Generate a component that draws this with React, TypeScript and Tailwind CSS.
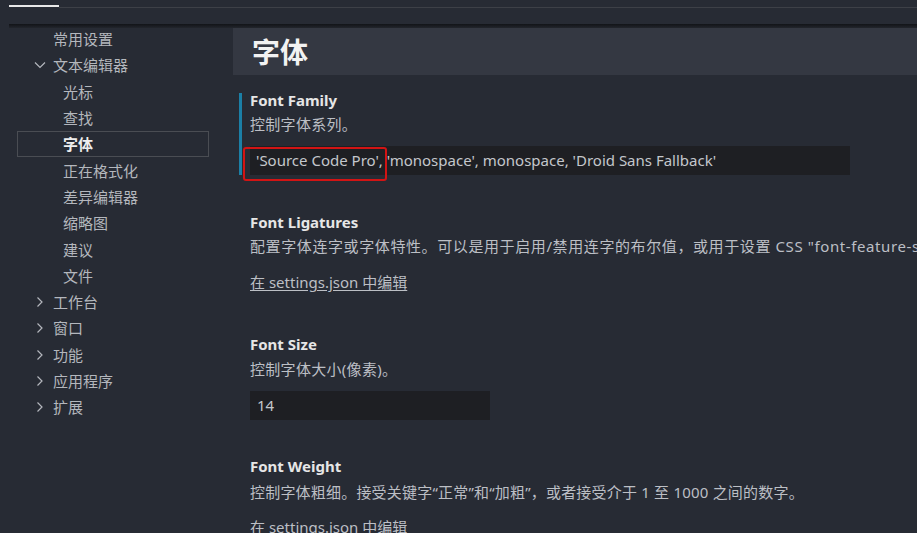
import React from "react";

const font = "font-['Noto_Sans','Noto_Sans_CJK_SC',sans-serif]";

function ChevronRight() {
  return (
    <svg width="8" height="12" viewBox="0 0 8 12" className="shrink-0">
      <path d="M1.5 1.5 L6 6 L1.5 10.5" fill="none" stroke="#b4b7bd" strokeWidth="1.2" />
    </svg>
  );
}
function ChevronDown() {
  return (
    <svg width="12" height="8" viewBox="0 0 12 8" className="shrink-0">
      <path d="M1 1.5 L6 6.5 L11 1.5" fill="none" stroke="#b4b7bd" strokeWidth="1.2" />
    </svg>
  );
}

type Item = { label: string; level: 1 | 2; chevron?: "down" | "right"; selected?: boolean };

const items: Item[] = [
  { label: "常用设置", level: 1 },
  { label: "文本编辑器", level: 1, chevron: "down" },
  { label: "光标", level: 2 },
  { label: "查找", level: 2 },
  { label: "字体", level: 2, selected: true },
  { label: "正在格式化", level: 2 },
  { label: "差异编辑器", level: 2 },
  { label: "缩略图", level: 2 },
  { label: "建议", level: 2 },
  { label: "文件", level: 2 },
  { label: "工作台", level: 1, chevron: "right" },
  { label: "窗口", level: 1, chevron: "right" },
  { label: "功能", level: 1, chevron: "right" },
  { label: "应用程序", level: 1, chevron: "right" },
  { label: "扩展", level: 1, chevron: "right" },
];

function Sidebar() {
  return (
    <div className="w-[233px] shrink-0 pt-[2px] flex flex-col">
      {items.map((it) => (
        <div key={it.label} className="h-[26.3px] pl-[17px] pr-[24px]">
          <div
            className={
              "h-full flex items-center border " +
              (it.selected ? "border-[#4a4d53]" : "border-transparent")
            }
          >
            <div className="w-[35px] shrink-0 flex justify-end pr-[8px]">
              {it.chevron === "down" && <span className="mr-[-1px]"><ChevronDown /></span>}
              {it.chevron === "right" && <span className="mr-[1px]"><ChevronRight /></span>}
            </div>
            <span
              className={
                "text-[15px] leading-[20px] whitespace-nowrap " +
                (it.level === 2 ? "ml-[10px] " : "") +
                (it.selected ? "font-bold text-[#eeeeee]" : "text-[#b4b7bd]")
              }
            >
              {it.label}
            </span>
          </div>
        </div>
      ))}
    </div>
  );
}

function Title({ children }: { children: React.ReactNode }) {
  return <div className="text-[15px] font-bold text-[#e6e6e6] leading-[20px] whitespace-nowrap">{children}</div>;
}
function Desc({ children, className = "" }: { children: React.ReactNode; className?: string }) {
  return (
    <div className={"text-[15px] text-[#bcbfc5] leading-[20px] whitespace-nowrap " + className}>{children}</div>
  );
}
function Link({ className = "" }: { className?: string }) {
  return (
    <div className={"text-[15px] text-[#bcbfc5] leading-[20px] whitespace-nowrap underline underline-offset-2 " + className}>
      在 settings.json 中编辑
    </div>
  );
}

function Content() {
  return (
    <div className="flex-1 min-w-0 overflow-hidden pt-[4px]">
      <div className="h-[47px] bg-[#343842] pl-[19px] flex items-center">
        <span className="text-[28px] font-bold text-[#f2f2f2] leading-none">字体</span>
      </div>

      {/* Font Family */}
      <div className="mt-[18px] ml-[6px] border-l-[3px] border-[#1b7fa6] pl-[8px]">
        <div className="text-[15px] font-bold text-[#e6e6e6] leading-[14px] h-[14px] whitespace-nowrap">Font Family</div>
        <Desc className="mt-[7px] tracking-[0.3px]">控制字体系列。</Desc>
        <div className="mt-[12px] w-[600px] h-[29px] bg-[#1e1f23] relative flex items-center pl-[6px]">
          <span className="text-[15px] text-[#c4c7cc] whitespace-nowrap">
            'Source Code Pro', 'monospace', monospace, 'Droid Sans Fallback'
          </span>
          <div className="absolute left-[-7px] top-[1px] w-[144px] h-[34px] border-2 border-[#d21414] rounded-[3px]" />
        </div>
      </div>

      {/* Font Ligatures */}
      <div className="pl-[17px] pt-[37px]">
        <Title>Font Ligatures</Title>
        <Desc className="mt-[4px] tracking-[0.6px]">
          配置字体连字或字体特性。可以是用于启用/禁用连字的布尔值，或用于设置 CSS "font-feature-settings" 属性值的字符串。
        </Desc>
        <Link className="mt-[16px]" />
      </div>

      {/* Font Size */}
      <div className="pl-[17px] pt-[42px]">
        <Title>Font Size</Title>
        <Desc className="mt-[5px] tracking-[0.3px]">控制字体大小(像素)。</Desc>
        <div className="mt-[12px] w-[240px] h-[29px] bg-[#1e1f23] flex items-center pl-[7px]">
          <span className="text-[15px] text-[#c4c7cc]">14</span>
        </div>
      </div>

      {/* Font Weight */}
      <div className="pl-[17px] pt-[36px]">
        <Title>Font Weight</Title>
        <Desc className="mt-[6px] tracking-[0.2px]">控制字体粗细。接受关键字“正常”和“加粗”，或者接受介于 1 至 1000 之间的数字。</Desc>
        <Link className="mt-[15px]" />
      </div>
    </div>
  );
}

export default function App() {
  return (
    <div className={"w-[917px] h-[533px] overflow-hidden bg-[#272b34] relative flex flex-col " + font}>
      <div className="h-[24px] shrink-0 pt-[5px] pl-[9px]">
        <div className="flex items-start">
          <div className="w-[50px] h-[2px] bg-[#e8e8e8]" />
          <div className="flex-1 h-[1px] mt-[2px] bg-[#3d4047]" />
        </div>
      </div>
      <div className="flex-1 flex min-h-0">
        <Sidebar />
        <Content />
      </div>
      <div className="absolute left-[9px] right-0 top-[24px] h-[4px] bg-gradient-to-b from-[#121418] to-[#22252c]" />
    </div>
  );
}
